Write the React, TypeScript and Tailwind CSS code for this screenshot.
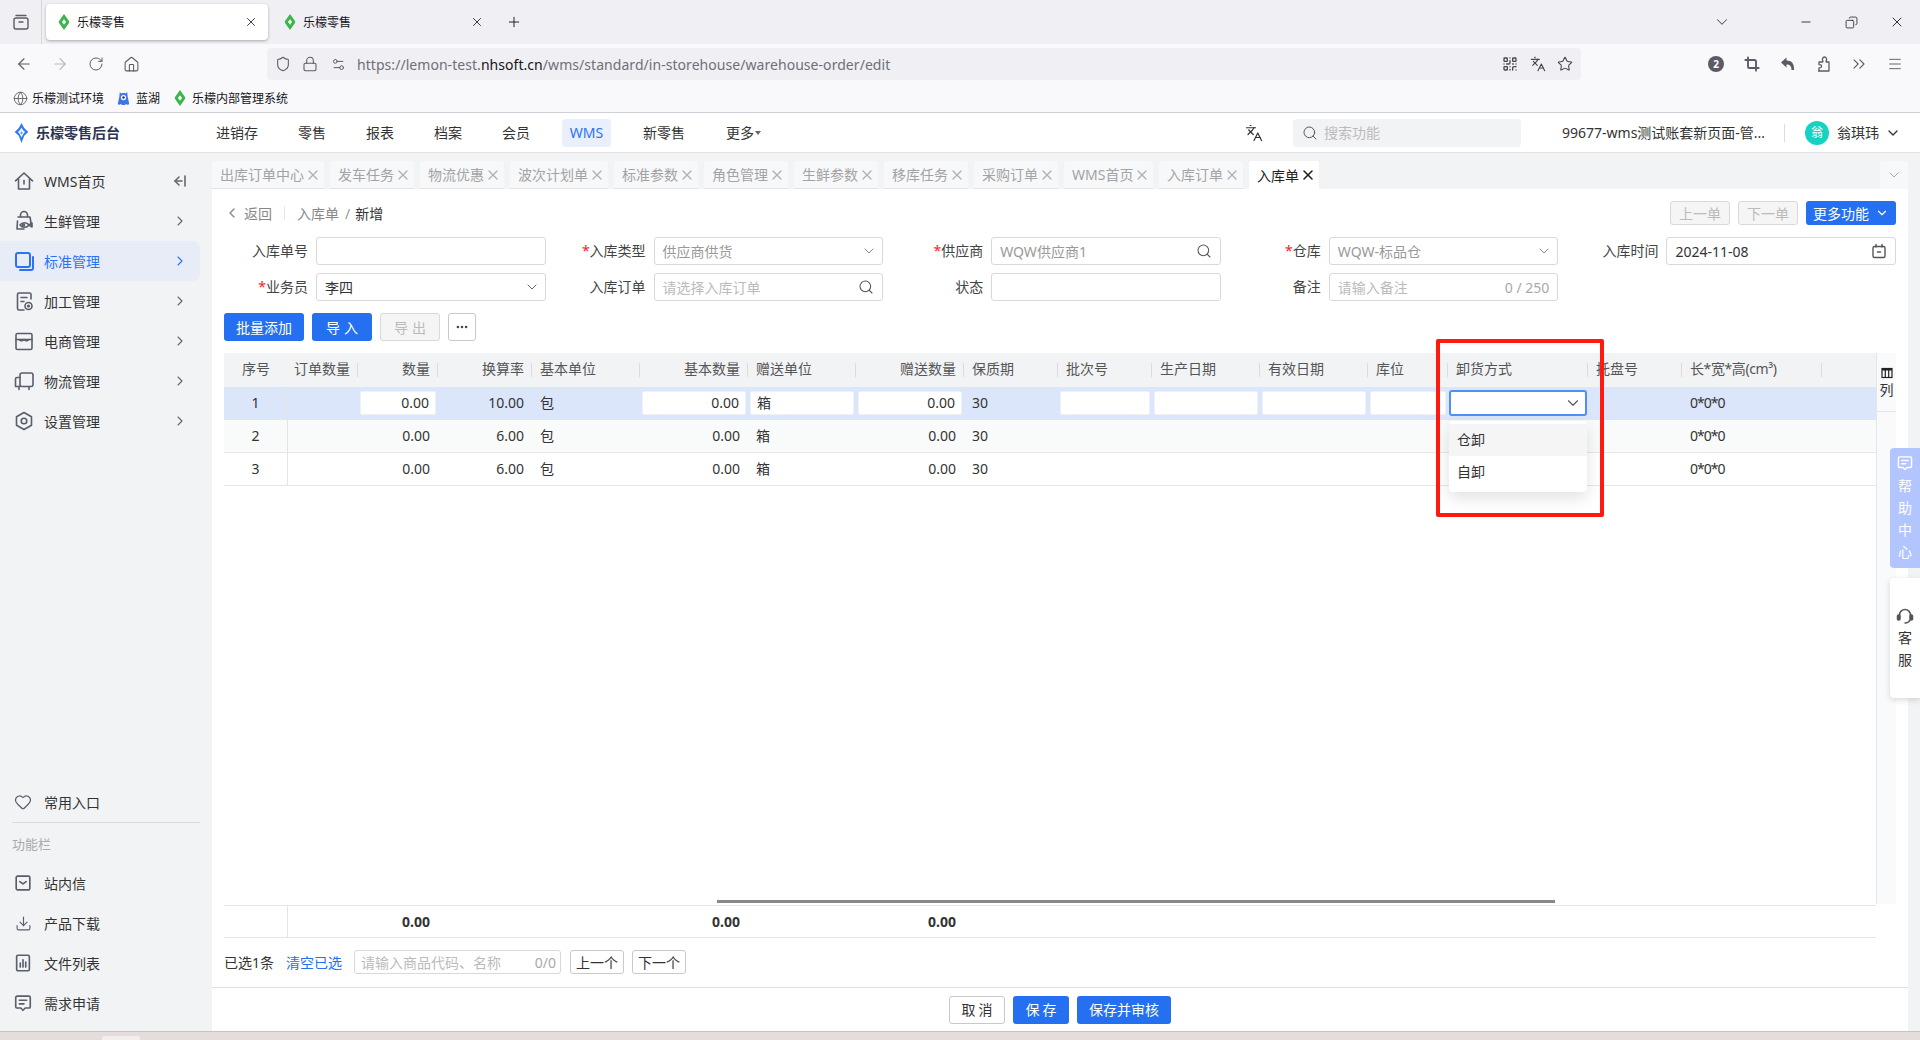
import React from "react";
import {
  ArrowLeft, ArrowRight, RotateCw, Home, Shield, Lock, Globe, X, Plus, ChevronDown, ChevronRight, ChevronLeft,
  Minus, Search, Languages, Star, QrCode, Crop, ChevronsRight, Menu, Ellipsis,
  Heart, Download, Settings2, Copy,
} from "lucide-react";

const font = { fontFamily: '"Noto Sans", "Noto Sans CJK SC", sans-serif' };

function Diamond({ className = "" }: { className?: string }) {
  return (
    <svg viewBox="0 0 14 20" className={className}>
      <path d="M7 0 L13.2 8.6 Q14 10 13.2 11.4 L7 20 L0.8 11.4 Q0 10 0.8 8.6 Z" fill="#3cb54a" />
      <path d="M7 6.5 L9.6 10 L7 13.5 L4.4 10 Z" fill="#fff" />
    </svg>
  );
}

type IconProps = { className?: string };
const S = ({ className = "", children, sw = 1.6 }: IconProps & { children: React.ReactNode; sw?: number }) => (
  <svg viewBox="0 0 22 22" width="22" height="22" fill="none" stroke="currentColor" strokeWidth={sw} strokeLinecap="round" strokeLinejoin="round" className={className}>
    {children}
  </svg>
);
const IHome = (p: IconProps) => <S {...p}><path d="M2.5 10.8 L11 3 L19.5 10.8" /><path d="M5.5 9 V19 H16.5 V9" /><path d="M11 10.5 v3.5" /></S>;
const IBag = (p: IconProps) => <S {...p}><path d="M7.5 7 V5 a3.5 3.5 0 0 1 7 0 V7" /><path d="M5 7 H17 L18 13 M4.5 11 L4 19 H11" /><path d="M7 15 C9 12 14 12 16 15 C14 18 9 18 7 15 Z" /><path d="M16 15 L19 13 V17 Z" /><circle cx="10.5" cy="15" r="1" /></S>;
const IStd = (p: IconProps) => <S {...p} sw={2}><rect x="3" y="3" width="14" height="14" rx="2" /><path d="M20 7 V18 a2 2 0 0 1 -2 2 H7" /></S>;
const IProc = (p: IconProps) => <S {...p}><path d="M18 9 V4.5 A1.5 1.5 0 0 0 16.5 3 H6 A1.5 1.5 0 0 0 4.5 4.5 V18.5 A1.5 1.5 0 0 0 6 20 H11" /><path d="M8 7.5 H14 M8 11.5 H11" /><circle cx="15.5" cy="16" r="3.5" /><circle cx="15.5" cy="16" r="0.8" /></S>;
const IShop = (p: IconProps) => <S {...p}><rect x="3" y="3.5" width="16" height="16" rx="1.5" /><path d="M3 9.5 H19" /><path d="M6 9.5 q2.5 2.5 5 0 q2.5 2.5 5 0" /></S>;
const ITruck = (p: IconProps) => <S {...p}><rect x="7" y="3" width="13" height="13.5" rx="2" /><path d="M7 7.5 H4 A1.5 1.5 0 0 0 2.5 9 V16.5 H7" /><path d="M6 17 V19.5 M16 17 V19.5" /></S>;
const IHex = (p: IconProps) => <S {...p}><path d="M11 2.5 L18.5 6.8 V15.2 L11 19.5 L3.5 15.2 V6.8 Z" /><circle cx="11" cy="11" r="2.8" /></S>;
const IMail = (p: IconProps) => <S {...p} sw={1.8}><rect x="3.5" y="3.5" width="15" height="15" rx="1.5" /><path d="M7.5 9.5 L11 12 L14.5 9.5" /></S>;
const IBars = (p: IconProps) => <S {...p} sw={1.8}><rect x="4" y="2.5" width="14" height="17" rx="1.5" /><path d="M8 15.5 V11 M11 15.5 V7.5 M14 15.5 V10" /></S>;
const IChat = (p: IconProps) => <S {...p} sw={1.8}><path d="M4.5 3.5 H17.5 A1.5 1.5 0 0 1 19 5 V15 A1.5 1.5 0 0 1 17.5 16.5 H13.5 L11 19 L8.5 16.5 H4.5 A1.5 1.5 0 0 1 3 15 V5 A1.5 1.5 0 0 1 4.5 3.5 Z" /><path d="M7 8 H15 M7 12 H12" /></S>;

const tabs = [
  ["出库订单中心", 112], ["发车任务", 84], ["物流优惠", 84], ["波次计划单", 98], ["标准参数", 84], ["角色管理", 84],
  ["生鲜参数", 84], ["移库任务", 84], ["采购订单", 84], ["WMS首页", 89], ["入库订单", 84],
] as const;

const cols = "grid-cols-[64px_70px_80px_94px_108px_108px_108px_108px_94px_94px_108px_108px_80px_140px_94px_140px_54px]";

const nav = [
  [IHome, "WMS首页"], [IBag, "生鲜管理"], [IStd, "标准管理"], [IProc, "加工管理"], [IShop, "电商管理"], [ITruck, "物流管理"], [IHex, "设置管理"],
] as const;

function Field({ label, req, children }: { label: string; req?: boolean; children: React.ReactNode }) {
  return (
    <div className="flex items-center gap-2 h-7">
      <div className="w-[84px] shrink-0 text-right text-[14px] leading-7 text-[#444]">
        {req && <span className="text-[#f5222d]">*</span>}
        {label}
      </div>
      <div className="flex-1 h-7 border border-[#d9d9d9] rounded-[3px] flex items-center px-2 text-[14px] min-w-0">{children}</div>
    </div>
  );
}

function Cell({ v, right, center, pad = "px-2", tight }: { v?: string; right?: boolean; center?: boolean; pad?: string; tight?: boolean }) {
  return <div className={`${pad} text-[14px] leading-[32px] text-[#333] ${tight ? "tracking-[-1px]" : ""} ${right ? "text-right" : center ? "text-center" : "text-left"}`}>{v}</div>;
}

function Inp({ v, right, left }: { v?: string; right?: boolean; left?: boolean }) {
  return (
    <div className="flex items-center h-full px-[2px]">
      <div className={`w-full h-6 bg-white rounded-[2px] border border-[#eef1f6] px-[6px] text-[14px] leading-[22px] text-[#333] ${right ? "text-right" : left ? "text-left" : ""}`}>{v}</div>
    </div>
  );
}

function Row({ n, rate, first }: { n: number; rate: string; first?: boolean }) {
  return (
    <div className={`grid ${cols} h-[33px] border-b ${first ? "bg-[#dce6fb] border-[#dce6fb] h-[32px]" : n === 2 ? "bg-[#f9fbfa] border-[#e6e6e6]" : "bg-white border-[#e6e6e6]"}`}>
      <div className="border-r border-[#e4e4e4] text-center text-[14px] leading-[32px] text-[#333]">{n}</div>
      <Cell />
      {first ? <Inp v="0.00" right /> : <Cell v="0.00" right />}
      <Cell v={rate} right />
      <Cell v="包" />
      {first ? <Inp v="0.00" right /> : <Cell v="0.00" right />}
      {first ? <Inp v="箱" left /> : <Cell v="箱" />}
      {first ? <Inp v="0.00" right /> : <Cell v="0.00" right />}
      <Cell v="30" />
      {first ? <Inp /> : <Cell />}
      {first ? <Inp /> : <Cell />}
      {first ? <Inp /> : <Cell />}
      {first ? <Inp /> : <Cell />}
      {first ? (
        <div className="flex items-center h-full pl-[1px]">
          <div className="w-[138px] h-[26px] bg-white rounded-[3px] border-2 border-[#4f8ff7] flex items-center justify-end pr-[3px]">
            <ChevronDown size={18} className="text-[#555]" strokeWidth={1.5} />
          </div>
        </div>
      ) : <Cell />}
      <Cell />
      <Cell v="0*0*0" tight />
      <Cell />
    </div>
  );
}

const cd = "text-[#888] -mr-[3px]";

export default function App() {
  const headers: [string, string][] = [
    ["序号", "text-center"], ["订单数量", "text-left"], ["数量", "text-right"], ["换算率", "text-right"], ["基本单位", "text-left"],
    ["基本数量", "text-right"], ["赠送单位", "text-left"], ["赠送数量", "text-right"], ["保质期", "text-left"], ["批次号", "text-left"],
    ["生产日期", "text-left"], ["有效日期", "text-left"], ["库位", "text-left"], ["卸货方式", "text-left"], ["托盘号", "text-left"],
    ["长*宽*高(cm³)", "text-left tracking-[-0.4px]"], ["", "text-left"],
  ];
  return (
    <div className="relative w-[1920px] h-[1040px] overflow-hidden flex flex-col bg-[#e5dcdc]" style={font}>
      {/* browser tab strip */}
      <div className="h-11 bg-[#f0f0f4] flex items-center shrink-0">
        <div className="w-[42px] h-full border-r border-[#d5d5da] flex items-center justify-center">
          <svg viewBox="0 0 18 18" width="18" height="18" fill="none" stroke="#5b5b66" strokeWidth="1.4" strokeLinecap="round">
            <path d="M4 2.5 H14" /><rect x="2" y="5" width="14" height="11" rx="2" /><path d="M7 9 H11" />
          </svg>
        </div>
        <div className="ml-[4px] w-[222px] h-9 bg-white rounded-[4px] shadow-[0_1px_3px_rgba(0,0,0,0.3)] flex items-center pl-[12px] pr-[10px]">
          <Diamond className="w-[12px] h-[16px] mr-[7px]" />
          <span className="text-[12px] text-[#15141a] flex-1 pt-[1px]">乐檬零售</span>
          <X size={14} className="text-[#15141a]" strokeWidth={1.4} />
        </div>
        <div className="ml-[4px] w-[222px] h-9 flex items-center pl-[12px] pr-[10px]">
          <Diamond className="w-[12px] h-[16px] mr-[7px]" />
          <span className="text-[12px] text-[#15141a] flex-1 pt-[1px]">乐檬零售</span>
          <X size={14} className="text-[#15141a]" strokeWidth={1.4} />
        </div>
        <Plus size={16} className="ml-[12px] text-[#15141a]" strokeWidth={1.4} />
        <div className="flex-1" />
        <ChevronDown size={18} className="text-[#5b5b66] mr-[68px]" strokeWidth={1.4} />
        <Minus size={14} className="text-[#15141a] mr-[32px]" strokeWidth={1.4} />
        <Copy size={13} className="text-[#15141a] mr-[31px] -scale-x-100" strokeWidth={1.4} />
        <X size={16} className="text-[#15141a] mr-[15px]" strokeWidth={1.3} />
      </div>
      {/* toolbar */}
      <div className="h-10 bg-[#f9f9fb] flex items-center shrink-0">
        <ArrowLeft size={18} className="ml-[15px] text-[#5b5b66]" strokeWidth={1.5} />
        <ArrowRight size={18} className="ml-[18px] text-[#b9b9bf]" strokeWidth={1.5} />
        <RotateCw size={16} className="ml-[19px] text-[#5b5b66]" strokeWidth={1.5} />
        <Home size={17} className="ml-[19px] text-[#5b5b66]" strokeWidth={1.5} />
        <div className="ml-[127px] w-[1314px] h-8 bg-[#f0f0f4] rounded-[4px] flex items-center">
          <Shield size={16} className="ml-[8px] text-[#5b5b66]" strokeWidth={1.6} />
          <Lock size={16} className="ml-[11px] text-[#5b5b66]" strokeWidth={1.6} />
          <Settings2 size={15} className="ml-[13px] text-[#5b5b66]" strokeWidth={1.6} />
          <span className="ml-[11px] text-[#6f6f78] whitespace-nowrap text-[14px] tracking-[0.05px]">https://lemon-test.<span className="text-[#15141a]">nhsoft.cn</span>/wms/standard/in-storehouse/warehouse-order/edit</span>
          <div className="flex-1" />
          <QrCode size={16} className="text-[#45454f] mr-[12px]" strokeWidth={2} />
          <Languages size={16} className="text-[#45454f] mr-[11px]" strokeWidth={1.7} />
          <Star size={16} className="text-[#45454f] mr-[8px]" strokeWidth={1.6} />
        </div>
        <div className="ml-[127px] w-4 h-4 rounded-full bg-[#5b5b66] text-white text-[10px] font-bold flex items-center justify-center">2</div>
        <Crop size={16} className="ml-[20px] text-[#5b5b66]" strokeWidth={2.8} />
        <svg viewBox="0 0 16 16" width="16" height="16" className="ml-[20px]" fill="#5b5b66">
          <path d="M1 6.5 L6.5 1.5 V4.5 C11.5 4.5 14.5 7.5 14 14 L11.5 14 C11.5 10 10 8.5 6.5 8.5 V11.5 Z" />
        </svg>
        <svg viewBox="0 0 16 16" width="16" height="16" className="ml-[20px]" fill="none" stroke="#5b5b66" strokeWidth="1.3" strokeLinejoin="round">
          <path d="M2 15 H13 V6 H10.5 C10 6 10 5.4 10.3 5 C11 4 10.5 1 8.5 1 C6.5 1 6 3.5 6.8 5 C7 5.4 7 6 6.5 6 H3 V8.6 C4.5 8.4 5.5 9 5.5 10.2 C5.5 11.4 4.5 12 3 11.8 V15" />
        </svg>
        <ChevronsRight size={20} className="ml-[17px] text-[#5b5b66]" strokeWidth={1.3} />
        <Menu size={16} className="ml-[18px] text-[#5b5b66]" strokeWidth={1.4} />
      </div>
      {/* bookmarks */}
      <div className="h-7 bg-[#f9f9fb] border-b border-[#cfcfd8] flex items-center shrink-0 text-[12px] text-[#15141a] box-content">
        <Globe size={15} className="ml-[13px] text-[#5b5b66]" strokeWidth={1.4} />
        <span className="ml-[4px] pt-[1px]">乐檬测试环境</span>
        <svg viewBox="0 0 14 16" className="ml-[13px] w-[13px] h-[15px]">
          <path d="M3 1 L4.5 2.5 C6 1.8 8 1.8 9.5 2.5 L11 1 L11.5 6 L13 13 C13 15 11 15 10 14 C9 15.5 5 15.5 4 14 C3 15 1 15 1 13 L2.5 6 Z" fill="#3f74ea" />
          <circle cx="7" cy="7" r="2.8" fill="#fff" /><circle cx="7" cy="7" r="1.3" fill="#1d2f5f" />
        </svg>
        <span className="ml-[6px] pt-[1px]">蓝湖</span>
        <Diamond className="ml-[14px] w-[12px] h-[16px]" />
        <span className="ml-[6px] pt-[1px]">乐檬内部管理系统</span>
      </div>
      {/* app header */}
      <div className="h-10 bg-white border-b border-[#e0e0e0] flex items-center shrink-0 relative text-[14px] text-[#333]">
        <svg viewBox="0 0 16 22" className="ml-[14px] w-[15px] h-[20px]">
          <path d="M8 0 L11 5.5 L15.5 10 L11 14 L8 22 L5 14 L0.5 10 L5 5.5 Z" fill="#2f7bf5" />
          <path d="M8 5 C9.5 8 10.5 9 12 10 C10.5 11 9.5 13 8 16 C6.5 13 5.5 11 4 10 C5.5 9 6.5 8 8 5 Z" fill="#fff" />
          <path d="M8 9 L9.5 10.5 L8 13 L6.5 10.5 Z" fill="#56a4fa" />
        </svg>
        <span className="ml-[7px] font-bold text-[14px] text-[#2c3550] w-[84px] whitespace-nowrap">乐檬零售后台</span>
        <span className="ml-[96px]">进销存</span>
        <span className="ml-[40px]">零售</span>
        <span className="ml-[40px]">报表</span>
        <span className="ml-[40px]">档案</span>
        <span className="ml-[40px]">会员</span>
        <span className="ml-[32px] w-[49px] h-7 rounded-[4px] bg-[#e9effd] text-[#2b72f5] flex items-center justify-center">WMS</span>
        <span className="ml-[32px]">新零售</span>
        <span className="ml-[41px]">更多</span>
        <span className="ml-[1px] w-0 h-0 border-x-[3.5px] border-x-transparent border-t-[4px] border-t-[#666]" />
        <div className="flex-1" />
        <Languages size={18} className="text-[#333] mr-[30px]" strokeWidth={1.6} />
        <div className="w-[228px] h-7 rounded-[4px] bg-[#f2f3f5] flex items-center pl-[9px] mr-[41px]">
          <Search size={16} className="text-[#555]" strokeWidth={1.5} />
          <span className="ml-[6px] text-[#bbb] text-[14px]">搜索功能</span>
        </div>
        <span className="w-[202px] whitespace-nowrap overflow-hidden">99677-wms测试账套新页面-管...</span>
        <span className="ml-[20px] w-px h-[18px] bg-[#ddd]" />
        <span className="ml-[20px] w-6 h-6 rounded-full bg-[#16d2c0] text-white text-[12px] flex items-center justify-center">翁</span>
        <span className="ml-[8px]">翁琪玮</span>
        <ChevronDown size={16} className="ml-[6px] mr-[19px] text-[#333]" />
      </div>
      {/* body */}
      <div className="flex-1 flex min-h-0 bg-[#f2f3f5] border-b border-[#c9c2c2]">
        <div className="w-[212px] shrink-0 flex flex-col text-[14px] text-[#333] pt-[8px]">
          {nav.map(([Icon, t], i) => (
            <div key={t} className={`h-10 w-[200px] rounded-r-lg flex items-center pl-[13px] pr-[12px] ${i === 2 ? "bg-[#e8ecf7] text-[#2b72f5]" : ""}`}>
              <Icon className={i === 2 ? "text-[#2b72f5]" : "text-[#5a5e6b]"} />
              <span className="ml-[9px] flex-1">{t}</span>
              {i === 0 ? (
                <svg viewBox="0 0 16 16" width="16" height="16" fill="none" stroke="#666" strokeWidth="1.6" strokeLinecap="round" strokeLinejoin="round"><path d="M13 3 V13" /><path d="M10 8 H3" /><path d="M7 4 L3 8 L7 12" /></svg>
              ) : <ChevronRight size={16} className={i === 2 ? "text-[#2b72f5]" : "text-[#666]"} strokeWidth={1.6} />}
            </div>
          ))}
          <div className="flex-1" />
          <div className="h-10 flex items-center pl-[14px]"><Heart size={18} className="text-[#5a5e6b]" strokeWidth={1.6} /><span className="ml-[12px]">常用入口</span></div>
          <div className="mx-3 border-t border-[#dcdcdc]" />
          <div className="mx-3 h-[40px] pt-[4px] flex items-center text-[13px] text-[#aaa]">功能栏</div>
          <div className="h-10 flex items-center pl-[13px]"><IMail className="w-[20px] h-[20px] text-[#5a5e6b]" /><span className="ml-[11px]">站内信</span></div>
          <div className="h-10 flex items-center pl-[15px]"><Download size={17} className="text-[#5a5e6b]" strokeWidth={1.6} /><span className="ml-[12px]">产品下载</span></div>
          <div className="h-10 flex items-center pl-[13px]"><IBars className="w-[20px] h-[20px] text-[#5a5e6b]" /><span className="ml-[11px]">文件列表</span></div>
          <div className="h-10 flex items-center pl-[13px] mb-[8px]"><IChat className="w-[20px] h-[20px] text-[#5a5e6b]" /><span className="ml-[11px]">需求申请</span></div>
        </div>
        {/* main */}
        <div className="flex-1 flex flex-col min-w-0 pt-[8px] pr-3">
          {/* page tabs */}
          <div className="h-7 flex gap-[6px] shrink-0 relative">
            {tabs.map(([t, w]) => (
              <div key={t} style={{ width: w }} className="h-7 bg-[#f7f8fa] border-b border-[#e3e3e3] rounded-t-[3px] flex items-center justify-between pl-2 pr-[3px] text-[14px] text-[#a3a3a3] whitespace-nowrap">
                <span>{t}</span>
                <X size={16} className="text-[#b0b0b0]" strokeWidth={1.8} />
              </div>
            ))}
            <div className="w-[70px] h-7 bg-white rounded-t-[3px] flex items-center justify-between pl-2 pr-[3px] text-[14px] text-[#222]">
              <span>入库单</span>
              <X size={16} className="text-[#222]" strokeWidth={2.4} />
            </div>
            <div className="absolute right-0 top-0 w-[28px] h-7 bg-[#f7f8fa] flex items-center justify-center rounded-t-[3px]">
              <ChevronDown size={16} className="text-[#aaa]" strokeWidth={1.5} />
            </div>
          </div>
          <div className="flex-1 bg-white flex flex-col min-h-0 relative">
            <div className="flex-1 px-3 flex flex-col min-h-0">
              {/* breadcrumb */}
              <div className="h-6 mt-3 flex items-center text-[14px] text-[#888] shrink-0">
                <ChevronLeft size={16} className="text-[#888]" />
                <span className="ml-[4px]">返回</span>
                <span className="ml-[12px] w-px h-[14px] bg-[#e5e5e5]" />
                <span className="ml-[12px]">入库单</span>
                <span className="ml-[6px] text-[#999]">/</span>
                <span className="ml-[5px] text-[#333]">新增</span>
                <div className="flex-1" />
                <span className="w-[60px] h-6 border border-[#d9d9d9] bg-[#f5f5f5] rounded-[3px] text-[#bbb] flex items-center justify-center">上一单</span>
                <span className="ml-[8px] w-[60px] h-6 border border-[#d9d9d9] bg-[#f5f5f5] rounded-[3px] text-[#bbb] flex items-center justify-center">下一单</span>
                <span className="ml-[8px] w-[90px] h-6 bg-[#2470f0] rounded-[3px] text-white flex items-center justify-center gap-[6px]">更多功能<ChevronDown size={14} /></span>
              </div>
              {/* form */}
              <div className="grid grid-cols-5 gap-x-4 gap-y-2 mt-3 shrink-0">
                <Field label="入库单号"><span /></Field>
                <Field label="入库类型" req><span className="flex-1 text-[#999]">供应商供货</span><ChevronDown size={16} className={cd} strokeWidth={1.5} /></Field>
                <Field label="供应商" req><span className="flex-1 text-[#999]">WQW供应商1</span><Search size={16} className="text-[#555]" strokeWidth={1.6} /></Field>
                <Field label="仓库" req><span className="flex-1 text-[#999]">WQW-标品仓</span><ChevronDown size={16} className={cd} strokeWidth={1.5} /></Field>
                <Field label="入库时间"><span className="flex-1 text-[#333]">2024-11-08</span>
                  <svg viewBox="0 0 16 16" width="16" height="16" fill="none" stroke="#555" strokeWidth="1.4" strokeLinecap="round"><rect x="2" y="3.5" width="12" height="11" rx="1.5" /><path d="M5 1.5 V4 M11 1.5 V4 M6.5 9 H9.5" /></svg>
                </Field>
                <Field label="业务员" req><span className="flex-1 text-[#333]">李四</span><ChevronDown size={16} className="text-[#666] -mr-[3px]" strokeWidth={1.5} /></Field>
                <Field label="入库订单"><span className="flex-1 text-[#bbb]">请选择入库订单</span><Search size={16} className="text-[#555]" strokeWidth={1.6} /></Field>
                <Field label="状态"><span /></Field>
                <Field label="备注"><span className="flex-1 text-[#bbb]">请输入备注</span><span className="text-[#aaa]">0 / 250</span></Field>
              </div>
              {/* actions */}
              <div className="flex gap-2 mt-3 shrink-0 text-[14px]">
                <span className="w-[80px] h-7 bg-[#2470f0] rounded-[3px] text-white flex items-center justify-center">批量添加</span>
                <span className="w-[60px] h-7 bg-[#2470f0] rounded-[3px] text-white flex items-center justify-center tracking-[4px] pl-[4px]">导入</span>
                <span className="w-[60px] h-7 bg-[#f5f5f5] border border-[#d9d9d9] rounded-[3px] text-[#bbb] flex items-center justify-center tracking-[4px] pl-[4px]">导出</span>
                <span className="w-7 h-7 border border-[#c9c9c9] rounded-[3px] flex items-center justify-center"><Ellipsis size={14} className="text-[#444]" strokeWidth={2.5} /></span>
              </div>
              {/* table */}
              <div className="flex-1 mt-3 flex min-h-0">
                <div className="flex-1 flex flex-col min-w-0 relative">
                  <div className={`grid ${cols} h-[34px] bg-[#f2f3f5] shrink-0`}>
                    {headers.map(([h, a], i) => (
                      <div key={i} className={`relative text-[14px] leading-[32px] text-[#555] whitespace-nowrap px-2 ${a}`}>
                        {i === 1 ? <span className="-ml-[2px]">{h}</span> : h}
                        {i > 0 && i < 16 && <span className="absolute right-0 top-[10px] w-px h-[14px] bg-[#dcdcdc]" />}
                      </div>
                    ))}
                  </div>
                  <Row n={1} rate="10.00" first />
                  <Row n={2} rate="6.00" />
                  <Row n={3} rate="6.00" />
                  <div className="flex-1 relative">
                    <div className="absolute left-[493px] right-[321px] bottom-[2px] h-[3px] bg-[#888]" />
                  </div>
                  <div className={`grid ${cols} h-[33px] border-y border-[#e6e6e6] shrink-0 font-bold text-[14px] leading-[32px] text-[#333]`}>
                    <div className="border-r border-[#e4e4e4]" />
                    <div />
                    <div className="text-right px-2">0.00</div>
                    <div /><div />
                    <div className="text-right px-2">0.00</div>
                    <div />
                    <div className="text-right px-2">0.00</div>
                  </div>
                </div>
                <div className="w-5 shrink-0 bg-[#f9fafb] border-l border-[#e6e6e6] mb-[34px]">
                  <div className="h-[59px] border-b border-[#e6e6e6] flex flex-col items-center pt-[14px] text-[14px] leading-[18px] text-[#333]">
                    <svg viewBox="0 0 12 12" width="12" height="12" className="mb-[2px]" fill="none" stroke="#222" strokeWidth="1.2">
                      <rect x="1" y="1.5" width="10" height="9" /><path d="M1 2.5 H11" strokeWidth="2" /><path d="M4.3 2 V10 M7.7 2 V10" />
                    </svg>
                    <span>列</span>
                  </div>
                </div>
              </div>
              {/* selection */}
              <div className="h-[49px] shrink-0 flex items-center text-[14px] text-[#333] pb-[1px]">
                <span>已选1条</span>
                <span className="ml-[12px] text-[#2470f0]">清空已选</span>
                <div className="ml-[12px] w-[207px] h-6 border border-[#d9d9d9] rounded-[3px] flex items-center justify-between pl-[6px] pr-[4px]">
                  <span className="text-[#bbb]">请输入商品代码、名称</span>
                  <span className="text-[#aaa]">0/0</span>
                </div>
                <span className="ml-[9px] w-[54px] h-6 border border-[#c9c9c9] rounded-[3px] flex items-center justify-center">上一个</span>
                <span className="ml-[8px] w-[54px] h-6 border border-[#c9c9c9] rounded-[3px] flex items-center justify-center">下一个</span>
              </div>
            </div>
            {/* footer */}
            <div className="h-11 shrink-0 border-t border-[#e0e0e0] flex items-center justify-center gap-2 text-[14px]">
              <span className="w-[56px] h-7 border border-[#c9c9c9] rounded-[3px] flex items-center justify-center text-[#333] tracking-[3px] pl-[3px]">取消</span>
              <span className="w-[56px] h-7 bg-[#2470f0] rounded-[3px] flex items-center justify-center text-white tracking-[3px] pl-[3px]">保存</span>
              <span className="w-[94px] h-7 bg-[#2470f0] rounded-[3px] flex items-center justify-center text-white">保存并审核</span>
            </div>
          </div>
        </div>
      </div>
      <div className="h-2 shrink-0 relative">
        <span className="absolute left-[102px] top-[4px] w-[38px] h-1 bg-[#f3eeee] rounded-t-[2px]" />
      </div>
      {/* dropdown */}
      <div className="absolute left-[1449px] top-[421px] w-[138px] h-[71px] bg-white rounded-[4px] shadow-[0_6px_16px_rgba(0,0,0,0.12)] py-[3px] text-[14px] text-[#333]">
        <div className="h-8 leading-8 pl-2 bg-[#f5f5f5]">仓卸</div>
        <div className="h-8 leading-8 pl-2">自卸</div>
      </div>
      {/* annotation */}
      <div className="absolute left-[1436px] top-[339px] w-[168px] h-[178px] border-[4px] border-[#ff1a0f] rounded-[2px]" />
      {/* help */}
      <div className="absolute left-[1890px] top-[448px] w-[30px] h-[120px] bg-[#b3c5ff] rounded-l-[4px] flex flex-col items-center pt-[6px] text-white text-[14px] leading-[22px]">
        <IChat className="w-[18px] h-[18px] mb-[3px]" />
        <span>帮</span><span>助</span><span>中</span><span>心</span>
      </div>
      <div className="absolute left-[1890px] top-[578px] w-[30px] h-[120px] bg-white rounded-l-[4px] shadow-[0_2px_6px_rgba(0,0,0,0.15)] flex flex-col items-center pt-[29px] text-[#333] text-[14px] leading-[22px]">
        <svg viewBox="0 0 18 18" width="18" height="18" className="mb-[2px]" fill="none" stroke="#555" strokeWidth="1.5" strokeLinecap="round">
          <path d="M3.5 9 V8 a5.5 5.5 0 0 1 11 0 V9" /><rect x="1.5" y="8" width="2.5" height="5" rx="1" fill="#555" /><rect x="14" y="8" width="2.5" height="5" rx="1" fill="#555" /><path d="M14 13 C13 15.5 11 16 9 16" />
        </svg>
        <span>客</span><span>服</span>
      </div>
    </div>
  );
}
